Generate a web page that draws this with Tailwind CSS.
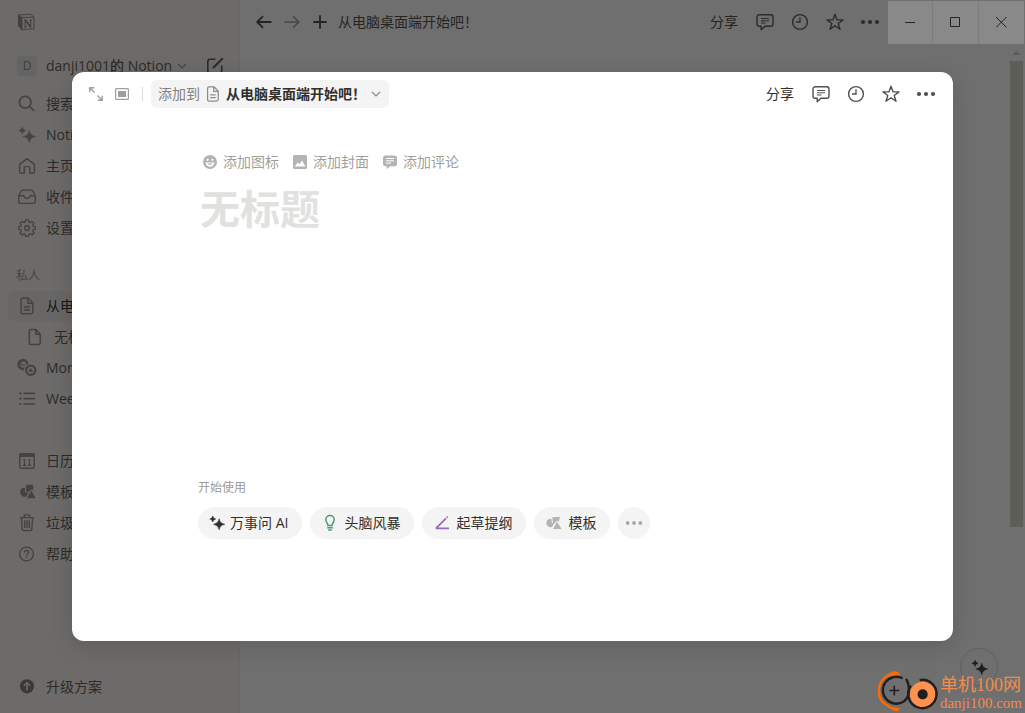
<!DOCTYPE html>
<html lang="zh-CN">
<head>
<meta charset="utf-8">
<meta name="viewport" content="width=device-width, initial-scale=1">
<title>Notion</title>
<script src="https://cdn.jsdelivr.net/npm/@tailwindcss/browser@4"></script>
</head>
<body class="relative flex h-screen overflow-hidden bg-[#6f6f6f] font-['Open_Sans','Noto_Sans_CJK_SC',sans-serif] text-sm leading-5 text-[#242422]">

<svg class="hidden" aria-hidden="true">
  <defs>
    <symbol id="page" viewBox="0 0 20 20"><path d="M5.8 2.5h5.1l4.3 4.4v8.7a1.9 1.9 0 0 1-1.9 1.9H5.8a1.5 1.5 0 0 1-1.5-1.5V4a1.5 1.5 0 0 1 1.5-1.500zM10.700 2.700v4.500H15" fill="none" stroke="currentColor" stroke-width="1.5" stroke-linejoin="round"/></symbol>
    <symbol id="doc" viewBox="0 0 20 20"><path d="M5.500 2h5.600l4.700 4.800v9a2 2 0 0 1-2 2H5.500A1.500 1.500 0 0 1 4 16.300V3.500A1.500 1.500 0 0 1 5.500 2zM10.800 2.200v5H15.600M6.800 11h6.200M6.800 14h6.200" fill="none" stroke="currentColor" stroke-width="1.4" stroke-linejoin="round"/></symbol>
    <symbol id="spark" viewBox="0 0 20 20"><path d="M12.400 5.400Q13.200 10.600 18.600 11.500Q13.200 12.400 12.400 17.600Q11.500 12.400 6.200 11.500Q11.500 10.600 12.400 5.400zM5.300 2.300Q5.700 5.100 8.600 5.600Q5.700 6 5.300 8.900Q4.800 6 2 5.600Q4.800 5.100 5.300 2.300z" fill="currentColor" stroke="currentColor" stroke-width=".6"/></symbol>
    <symbol id="shapes" viewBox="0 0 20 20"><path d="M8 6v4l3.200 1-1.600 3.400A4.500 4.500 0 1 1 6 5.700 4.500 4.500 0 0 1 8 6z" fill="currentColor"/><path d="M9 2.800h7.200V8.200L14.200 7.400 11.800 10.200 9 9.500z" fill="currentColor"/><path d="m14.200 8.600 4.600 7.600H10z" fill="currentColor"/></symbol>
    <symbol id="shapes-tilted" viewBox="0 0 20 20"><path d="M8.200 5.400 8.800 9.900l2.600.5-2.400 4A4.700 4.700 0 1 1 8.200 5.400z" fill="currentColor"/><path d="m9.200 3.700 8.600-.6-1.400 5.500-2-1-2.400 2.900-2.200-.6z" fill="currentColor"/><path d="m14.500 8.700 5 8H10z" fill="currentColor"/></symbol>
    <symbol id="comment" viewBox="0 0 20 20"><path d="M4.200 2.800h11.600a2.200 2.200 0 0 1 2.200 2.200v7a2.200 2.200 0 0 1-2.200 2.200H10l-3.800 3.500v-3.500h-2A2.200 2.200 0 0 1 2 12V5a2.200 2.200 0 0 1 2.200-2.200z" fill="none" stroke="currentColor" stroke-width="1.4" stroke-linejoin="round"/><path d="M6 6.500h8M6 8.800h8M6 11h4.500" stroke="currentColor" stroke-width="1"/></symbol>
    <symbol id="clock" viewBox="0 0 20 20"><circle cx="10" cy="10" r="7.400" fill="none" stroke="currentColor" stroke-width="1.400"/><path d="M10 5.200V10H6" fill="none" stroke="currentColor" stroke-width="1.300"/></symbol>
    <symbol id="star" viewBox="0 0 20 20"><path d="m10 2.200 2 5.600 6 .1-4.800 3.600 1.800 5.800-5-3.500-5 3.500 1.800-5.800L2 7.900l6-.1z" fill="none" stroke="currentColor" stroke-width="1.400" stroke-linejoin="round"/></symbol>
    <symbol id="dots" viewBox="0 0 20 20"><circle cx="3" cy="10" r="2.100" fill="currentColor"/><circle cx="10" cy="10" r="2.100" fill="currentColor"/><circle cx="17" cy="10" r="2.100" fill="currentColor"/></symbol>
    <symbol id="chev" viewBox="0 0 12 12"><path d="m2 4 4 4 4-4" fill="none" stroke="currentColor" stroke-width="1.200"/></symbol>
  </defs>
</svg>

<aside class="flex w-60 shrink-0 flex-col border-r border-[#686866] bg-[#6c6b69] text-[#2c2b29]">
  <div class="flex h-11 shrink-0 items-center pl-4 text-[#42413d]">
    <svg class="size-5" viewBox="0 0 20 20" role="img" aria-label="Notion" fill="none" stroke="currentColor"><path d="M2.400 3 14.600 2.300 18 5v11.800L6 17.600 2.800 14z" stroke-width="1"/><path d="m2.500 3 3.400 2.600L17.800 5M5.900 5.600v12" stroke-width="1"/><path d="M2.500 3.200 5.600 5.800v11.500l-2.800-3.300z" fill="currentColor"/><path d="M9.200 8.300v6.400m-1.300.2h2.800M8 8h1.900l4.800 6.800V8m-1.500 0h3" stroke-width="1.100"/><path d="m9.300 8 4.900 6.800" stroke-width="1.800"/></svg>
  </div>
  <div class="mx-2 mt-[7px] flex h-[30px] shrink-0 items-center pl-[9px]">
    <button class="flex items-center font-medium"><span class="mr-[9px] grid size-5 place-items-center rounded bg-[#646462] text-xs leading-none text-[#41403e]">D</span>danji1001的 Notion<svg class="ml-1 size-3 text-[#454442]"><use href="#chev"/></svg></button>
    <button class="mr-1.5 ml-auto" aria-label="新建页面"><svg class="size-5" viewBox="0 0 20 20" fill="none" stroke="currentColor" stroke-width="1.600"><path d="M10.500 3.300H5.200A2.400 2.400 0 0 0 2.800 5.700v9.100a2.400 2.400 0 0 0 2.400 2.400h9.100a2.400 2.400 0 0 0 2.400-2.400V9.500"/><path d="m8 12 9.800-9.800" stroke-width="2"/></svg></button>
  </div>
  <nav class="mx-2 mt-2 flex flex-col gap-px [&>a]:flex [&>a]:h-[30px] [&>a]:shrink-0 [&>a]:items-center [&>a]:gap-2 [&>a]:rounded-md [&>a]:px-2 [&_svg]:h-5 [&_svg]:w-[22px] [&_svg]:text-[#444340]">
    <a href="#"><svg viewBox="0 0 20 20" fill="none" stroke="currentColor" stroke-width="1.700"><circle cx="8.200" cy="8.200" r="5.800"/><path d="m12.500 12.500 4.600 4.400"/></svg>搜索</a>
    <a href="#" class="font-medium"><svg><use href="#spark"/></svg>Notion AI</a>
    <a href="#"><svg viewBox="0 0 20 20" fill="none" stroke="currentColor" stroke-width="1.400" stroke-linejoin="round"><path d="M2.600 8.400 10 2.600l7.400 5.800v7.300a1.600 1.600 0 0 1-1.600 1.600h-3v-5.500a1.200 1.200 0 0 0-1.200-1.200H8.400a1.200 1.200 0 0 0-1.200 1.200v5.500h-3a1.600 1.600 0 0 1-1.600-1.600z"/></svg>主页</a>
    <a href="#"><svg viewBox="0 0 20 20" fill="none" stroke="currentColor" stroke-width="1.400" stroke-linejoin="round"><path d="M1.700 8.800 4.200 4a1.800 1.800 0 0 1 1.500-.9h8.600a1.800 1.800 0 0 1 1.500.9l2.500 4.800v5.400a2.200 2.200 0 0 1-2.200 2.200H3.900a2.200 2.200 0 0 1-2.200-2.200zM1.800 8.800h4.700c.5 0 .7.500.9 1a2.800 2.800 0 0 0 5.200 0c.2-.5.4-1 .9-1h4.700"/></svg>收件箱</a>
    <a href="#"><svg viewBox="0 0 20 20" fill="none" stroke="currentColor" stroke-width="1.400" stroke-linejoin="round"><path d="m8.700 1.900h2.600l.6 2.100 1.200.5 1.900-1.100 1.900 1.900-1.100 1.900.5 1.200 2 .5v2.400l-2 .6-.5 1.200 1.100 1.900-1.900 1.900-1.900-1.100-1.200.5-.6 2.100H8.700l-.6-2.100-1.200-.5L5 16.900 3.100 15l1.100-1.900-.5-1.200-2-.6V8.900l2-.5.5-1.200-1.100-1.900L5 3.400l1.900 1.100 1.200-.5z"/><circle cx="10" cy="10.100" r="2.400"/></svg>设置</a>
    <h2 class="mt-[17px] flex h-[29px] items-center px-2 text-xs text-[#454442]">私人</h2>
    <a href="#" class="bg-[#686765] text-[#171715]"><svg><use href="#doc"/></svg>从电脑桌面端开始吧！</a>
    <a href="#" class="ml-2"><svg><use href="#page"/></svg>无标题</a>
    <a href="#" class="font-medium"><svg viewBox="0 0 20 20"><circle cx="6" cy="6.500" r="4.400" fill="none" stroke="currentColor" stroke-width="2.600"/><path d="M4 3.200v4h4" stroke="currentColor" fill="none"/><circle cx="13.700" cy="12.200" r="6.600" fill="#6c6b69"/><circle cx="13.700" cy="12.200" r="4.600" fill="none" stroke="currentColor" stroke-width="2.200"/><path d="M12 12.800c0-3 3.400-3 3.400 0l.6 1h-4.600z" fill="currentColor"/></svg>Monthly Budget</a>
    <a href="#" class="font-medium"><svg viewBox="0 0 20 20" stroke="currentColor" stroke-width="1.700"><path d="M6.600 4.300H18M6.600 9.700H18M6.600 15H18M2.300 4.300h2.200M2.300 9.700h2.200M2.300 15h2.200"/></svg>Weekly To-do List</a>
    <a href="#" class="mt-[31px]"><svg viewBox="0 0 20 20" fill="none" stroke="currentColor" stroke-width="1.500"><rect x="2.800" y="2.800" width="14.400" height="14.400" rx="1.400"/><path d="M2.800 4.500h14.400" stroke-width="3"/><path d="M6.100 8.900h1.400v5.300M5.900 14.300h3.300M11.100 8.900h1.400v5.300M10.900 14.300h3.300" stroke-width="1.200"/></svg>日历</a>
    <a href="#"><svg><use href="#shapes"/></svg>模板</a>
    <a href="#"><svg viewBox="0 0 20 20" fill="none" stroke="currentColor" stroke-width="1.400"><path d="M3 4.600h14M7.200 4.300V2.900c0-.6.4-1 1-1h3.600c.6 0 1 .4 1 1v1.400M4.400 4.800l.8 11.400c0 .8.6 1.400 1.400 1.400h6.800c.8 0 1.400-.6 1.400-1.400l.8-11.400M7.700 7.200v7.700M10 7.200v7.700M12.300 7.200v7.700"/></svg>垃圾箱</a>
    <a href="#"><svg viewBox="0 0 20 20" fill="none" stroke="currentColor" stroke-width="1.400"><circle cx="9.500" cy="10" r="6.900"/><path d="M7.500 8.400c0-2.600 4.200-2.600 4.200 0 0 1.400-2.100 1.300-2.100 3M9.600 12.400v1.400"/></svg>帮助</a>
  </nav>
  <a href="#" class="mx-2 mt-auto mb-[11px] flex h-[30px] shrink-0 items-center gap-2 px-2"><svg class="h-5 w-[22px] text-[#3a3937]" viewBox="0 0 20 20"><circle cx="10" cy="9.300" r="7.100" fill="currentColor"/><path d="M10 13.400V6M6.900 8.800 10 5.700l3.100 3.100" fill="none" stroke="#6c6b69" stroke-width="1.500"/></svg>升级方案</a>
</aside>

<main class="flex min-w-0 flex-1 flex-col">
  <header class="flex h-11 items-center pl-3">
    <div class="flex gap-1 [&>button]:grid [&>button]:size-6 [&>button]:place-items-center [&_svg]:size-5">
      <button aria-label="后退"><svg viewBox="0 0 20 20" fill="none" stroke="currentColor" stroke-width="1.800"><path d="M17.500 10H3.200M9 4.200 3.200 10 9 15.800"/></svg></button>
      <button aria-label="前进" class="text-[#474746]"><svg viewBox="0 0 20 20" fill="none" stroke="currentColor" stroke-width="1.600"><path d="M2.500 10h14.300M11 4.200l5.800 5.800-5.800 5.800"/></svg></button>
      <button aria-label="新建"><svg viewBox="0 0 20 20" fill="none" stroke="currentColor" stroke-width="1.800"><path d="M10 3.300v13.400M3.300 10h13.400"/></svg></button>
    </div>
    <a href="#" class="ml-1.5">从电脑桌面端开始吧！</a>
    <button class="mr-[13px] ml-auto">分享</button>
    <div class="mr-1 flex gap-[7px] text-[#2c2c2a] [&>button]:grid [&>button]:size-7 [&>button]:place-items-center [&_svg]:size-5">
      <button aria-label="评论"><svg><use href="#comment"/></svg></button>
      <button aria-label="更新"><svg><use href="#clock"/></svg></button>
      <button aria-label="收藏"><svg><use href="#star"/></svg></button>
      <button aria-label="更多"><svg><use href="#dots"/></svg></button>
    </div>
    <div class="mt-px mr-px flex h-[43px] gap-px self-start bg-[#7c7c7c] [&>button]:grid [&>button]:w-[45px] [&>button]:place-items-center [&>button]:bg-[#898989] [&_svg]:size-3">
      <button aria-label="最小化" class="max-w-11"><svg viewBox="0 0 12 12" stroke="currentColor"><path d="M1 5.500h10"/></svg></button>
      <button aria-label="最大化"><svg viewBox="0 0 12 12" fill="none" stroke="currentColor"><path d="M.5.500h9v9h-9z"/></svg></button>
      <button aria-label="关闭"><svg viewBox="0 0 12 12" stroke="currentColor"><path d="m0 0 10.500 10.500M10.500 0 0 10.500"/></svg></button>
    </div>
  </header>
  <div class="mr-0.5 flex flex-1 flex-col items-end">
    <svg class="mt-[7px] h-1 w-[13px] text-[#5a5a59]" viewBox="0 0 13 4"><path d="m2.500 4 4-4 4 4z" fill="currentColor"/></svg>
    <div class="mt-1.5 h-[466px] w-[13px] bg-[#5d5e58]"></div>
  </div>
</main>

<div class="absolute right-[27px] bottom-[27px] grid size-[38px] place-items-center rounded-full border border-[#626262] text-[#1e1e1c]"><svg class="size-[19px]"><use href="#spark"/></svg></div>

<div class="absolute inset-0 flex p-[72px]">
  <section role="dialog" aria-label="无标题" class="flex min-w-0 flex-1 flex-col rounded-xl bg-white text-[#32302c] shadow-[0_5px_22px_rgba(0,0,0,0.14)]">
    <header class="flex h-11 shrink-0 items-center pr-[13px] pl-3.5">
      <button aria-label="全屏打开" class="grid size-5 place-items-center text-[#a09f9c]"><svg class="size-4" viewBox="0 0 16 16" fill="none" stroke="currentColor" stroke-width="1.400"><path d="M1.800 6.200V1.800h4.400M2 2l4.600 4.600M14.200 9.800v4.400H9.800M14 14 9.400 9.400"/></svg></button>
      <button aria-label="切换视图" class="ml-1.5 grid size-5 place-items-center text-[#a09f9c]"><svg class="size-4" viewBox="0 0 16 16"><rect x="1.600" y="2.600" width="12.800" height="10.800" rx="1" fill="none" stroke="currentColor" stroke-width="1.200"/><path d="M4 5h8v6H4z" fill="currentColor"/></svg></button>
      <span class="ml-2.5 h-3.5 w-px bg-[#dcdcda]"></span>
      <button class="ml-2 flex h-7 items-center rounded-md bg-[#f4f4f4] px-[7px]"><span class="text-[#82817d]">添加到</span><svg class="ml-1 size-[18px] text-[#8d8c88]"><use href="#doc"/></svg><span class="ml-1 font-bold">从电脑桌面端开始吧！</span><svg class="ml-1 size-3 text-[#8d8c88]"><use href="#chev"/></svg></button>
      <button class="mr-[13px] ml-auto">分享</button>
      <div class="flex gap-[7px] text-[#50504c] [&>button]:grid [&>button]:size-7 [&>button]:place-items-center [&_svg]:size-5">
        <button aria-label="评论"><svg><use href="#comment"/></svg></button>
        <button aria-label="更新"><svg><use href="#clock"/></svg></button>
        <button aria-label="收藏"><svg><use href="#star"/></svg></button>
        <button aria-label="更多"><svg><use href="#dots"/></svg></button>
      </div>
    </header>
    <div class="flex flex-1 flex-col px-[126px]">
      <div class="mt-9 ml-1 flex gap-[13px] text-[#a09f9c] [&>button]:flex [&>button]:items-center [&>button]:gap-[5px] [&_svg]:size-4 [&_svg]:text-[#b5b4b1]">
        <button><svg viewBox="0 0 16 16"><circle cx="8" cy="8" r="7" fill="currentColor"/><circle cx="5.600" cy="5.800" r="1.100" fill="#fff"/><circle cx="10.400" cy="5.800" r="1.100" fill="#fff"/><path d="M3.600 8.600h8.800a4.400 4.200 0 0 1-8.800 0z" fill="#fff"/><path d="M5.200 9.600h5.600a3 2 0 0 1-5.600 0z" fill="currentColor"/></svg>添加图标</button>
        <button><svg viewBox="0 0 16 16"><rect x="1" y="1" width="14" height="14" rx="1.600" fill="currentColor"/><path d="m2.800 12.600 3-4.400 1.700 2 2.400-3.600 3.600 6z" fill="#fff"/></svg>添加封面</button>
        <button><svg viewBox="0 0 16 16"><path d="M3.400 1.500h9.200C13.900 1.500 15 2.500 15 3.900v6c0 1.300-1 2.400-2.400 2.400H8l-3.200 2.900v-2.900H3.400C2 12.300 1 11.300 1 9.900v-6c0-1.400 1-2.400 2.400-2.400z" fill="currentColor"/><path d="M4 4.500h8M4 6.800h8M4 9.100h5" stroke="#fff"/></svg>添加评论</button>
      </div>
      <h1 class="mt-[13px] ml-0.5 text-[40px] leading-[48px] font-bold text-[#e1e1e0]">无标题</h1>
      <div class="mt-auto pb-[102px]">
        <h2 class="text-xs leading-4 text-[#9b9a97]">开始使用</h2>
        <div class="mt-[11px] flex gap-2 [&_svg]:size-[18px] [&>button]:flex [&>button]:h-8 [&>button]:items-center [&>button]:gap-1.5 [&>button]:rounded-full [&>button]:bg-[#f4f4f4] [&>button]:pr-3.5 [&>button]:pl-2.5">
          <button><svg><use href="#spark"/></svg><span class="-ml-0.5">万事问 AI</span></button>
          <button><svg viewBox="0 0 18 18" fill="none" stroke="#4f9a76" stroke-width="1.500"><path d="M8 11.400C8 9 5.800 8.400 5.800 5.800a4.200 4.200 0 0 1 8.400 0c0 2.600-2.200 3.200-2.200 5.600zM7.200 13.700h5.600M8.200 16h3.600"/></svg>头脑风暴</button>
          <button><svg viewBox="0 0 18 18" stroke="#9a6bb8" fill="none" stroke-width="1.700"><path d="M5.500 12.800 14 4.300M14.700 3.600l1-1M3.800 14.300H17M4 14.200l1.500-1.600"/></svg>起草提纲</button>
          <button><svg class="text-[#b5b4b1]"><use href="#shapes-tilted"/></svg>模板</button>
          <button aria-label="更多" class="w-8 justify-center px-0! text-[#aaa9a7]"><svg><use href="#dots"/></svg></button>
        </div>
      </div>
    </div>
  </section>
</div>

<a href="#" class="absolute right-[3px] bottom-0 flex items-end text-[#f58b4b]">
  <svg class="h-[43px] w-16" viewBox="0 0 64 44" fill="none" aria-hidden="true"><path d="M20 2.500C15 2 12 5 8 8c-8 7-8 21 1 27 5 3 9 6 13 6" stroke="#ff6a00" stroke-width="2.500"/><path d="M10 7c5-6 12-7 14-2zM10 37c5 4 12 7 14 2z" fill="#ff6a00"/><path d="M26.500 8.500A13.800 13.800 0 1 0 28 32c4-3 5-7 5-12 0-5-1-8-3-11" stroke="#231d20" stroke-width="2.400"/><path d="M13 21h10M18 16v10" stroke="#231d20" stroke-width="1.600"/><circle cx="47" cy="25" r="13" fill="#ff914d"/><path d="M35 16a14.500 14.500 0 1 0 9-5.700" stroke="#231d20" stroke-width="2.400"/><circle cx="47" cy="25" r="5.200" fill="#231d20"/></svg>
  <span class="flex flex-col pb-0.5 font-['Liberation_Serif','Noto_Sans_CJK_SC',serif]"><span class="text-lg leading-5">单机100网</span><span class="text-[15px] leading-4">danji100.com</span></span>
</a>
</body>
</html>
